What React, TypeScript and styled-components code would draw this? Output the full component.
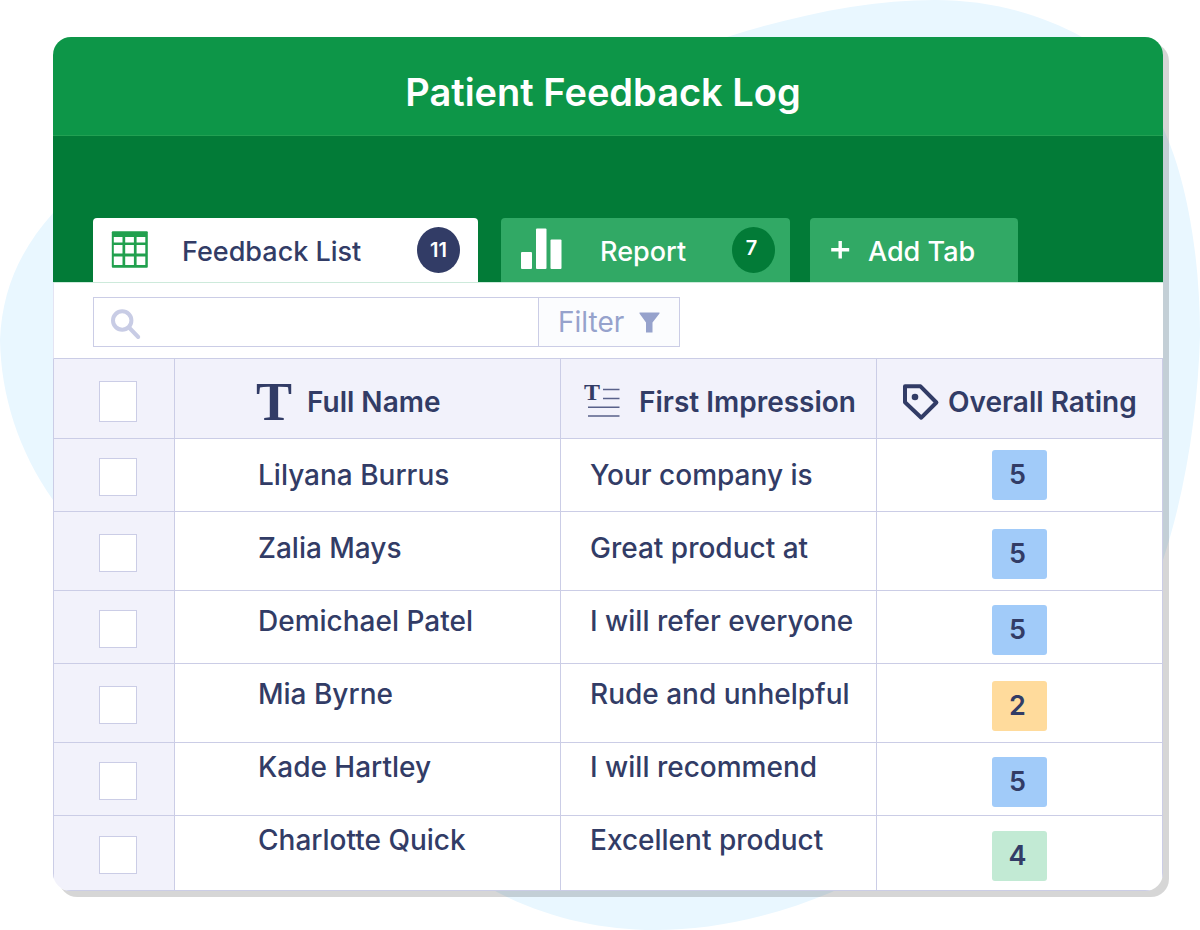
import React from "react";
import styled, { createGlobalStyle } from "styled-components";

const navy = "#323c66";
const line = "#cbcde6";
const lavender = "#f2f2fb";

const GlobalStyle = createGlobalStyle`
  * { box-sizing: border-box; }
  body {
    margin: 0;
    background: #ffffff;
    color: ${navy};
    font-family: Inter, "Liberation Sans", sans-serif;
  }
  button, input { font: inherit; color: inherit; }
`;

const Page = styled.main`
  position: relative;
  padding: 37px 37px 39px 53px;
`;

const Backdrop = styled.svg`
  position: absolute;
  top: 0;
  left: 0;
  width: 100%;
  height: 100%;
`;

const Card = styled.section`
  position: relative;
  overflow: hidden;
  background: #ffffff;
  border-radius: 18px;
  box-shadow: 6px 6px 0 rgba(0, 0, 0, 0.16);
`;

const TitleBar = styled.header`
  display: flex;
  align-items: center;
  justify-content: center;
  height: 99px;
  padding-top: 12px;
  padding-right: 10px;
  background: #0d9648;
  border-bottom: 1px solid #22a052;
`;

const Title = styled.h1`
  margin: 0;
  color: #ffffff;
  font-size: 38px;
  line-height: 48px;
  font-weight: 600;
`;

const TabBar = styled.nav`
  display: flex;
  align-items: flex-end;
  height: 147px;
  padding: 0 40px;
  background: #027b37;
  border-bottom: 1px solid #cdeadb;
`;

const Tab = styled.button<{ $width: number; $gap: number; $active?: boolean }>`
  display: flex;
  align-items: center;
  width: ${(p) => p.$width}px;
  height: 64px;
  margin: 0 ${(p) => p.$gap}px 0 0;
  padding: ${(p) => (p.$active ? "0 18px" : "0 15px 0 20px")};
  border: 0;
  border-radius: 4px 4px 0 0;
  background: ${(p) => (p.$active ? "#ffffff" : "#31a965")};
  color: ${(p) => (p.$active ? navy : "#ffffff")};
  font-size: 27px;
  line-height: 36px;
  font-weight: 500;
  text-align: left;
  cursor: pointer;
`;

const TabLabel = styled.span<{ $indent: number }>`
  flex: 1;
  padding-top: 3px;
  padding-left: ${(p) => p.$indent}px;
  white-space: nowrap;
`;

const Count = styled.span<{ $dark?: boolean }>`
  display: flex;
  align-items: center;
  justify-content: center;
  width: 43px;
  height: 46px;
  padding-right: ${(p) => (p.$dark ? 0 : 4)}px;
  padding-bottom: ${(p) => (p.$dark ? 0 : 4)}px;
  border-radius: 50%;
  background: ${(p) => (p.$dark ? navy : "#027b37")};
  color: #ffffff;
  font-size: 20px;
  line-height: 24px;
  font-weight: 600;
`;

const Toolbar = styled.form`
  display: flex;
  padding: 14px 40px 11px 39px;
  border-left: 1px solid #e4e4f3;
  border-bottom: 1px solid ${line};
`;

const SearchBox = styled.label`
  display: flex;
  align-items: center;
  width: 446px;
  height: 50px;
  padding-top: 2px;
  padding-left: 16px;
  border: 1px solid ${line};
`;

const SearchInput = styled.input`
  flex: 1;
  min-width: 0;
  height: 44px;
  padding: 0 12px;
  border: 0;
  outline: 0;
  background: transparent;
  font-size: 24px;
`;

const FilterButton = styled.button`
  display: flex;
  align-items: center;
  justify-content: space-between;
  width: 141px;
  height: 50px;
  padding: 0 19px;
  border: 1px solid ${line};
  border-left: 0;
  background: #fbfcfe;
  color: #96a2cc;
  font-size: 28px;
  line-height: 36px;
  cursor: pointer;
`;

const Table = styled.table`
  width: 100%;
  table-layout: fixed;
  border-spacing: 0;
  border-left: 1px solid ${line};
`;

const Col = styled.col<{ $width?: number }>`
  width: ${(p) => (p.$width ? p.$width + "px" : "auto")};
`;

const HeadCell = styled.th<{ $indent: number }>`
  height: 80px;
  padding: 6px 0 0 ${(p) => p.$indent}px;
  background: ${lavender};
  border-right: 1px solid ${line};
  border-bottom: 1px solid ${line};
  font-size: 28px;
  line-height: 36px;
  font-weight: 600;
  text-align: left;
`;

const HeadContent = styled.span<{ $gap: number }>`
  display: flex;
  align-items: center;
  gap: ${(p) => p.$gap}px;
  white-space: nowrap;
`;

const Row = styled.tr<{ $height: number }>`
  height: ${(p) => p.$height}px;
`;

const Cell = styled.td`
  padding: 0;
  border-right: 1px solid ${line};
  border-bottom: 1px solid ${line};
`;

const SelectCell = styled(Cell)`
  padding: 4px 0 0 45px;
  background: ${lavender};
`;

const TextCell = styled(Cell)<{ $top: number; $indent: number }>`
  padding: ${(p) => p.$top}px 0 0 ${(p) => p.$indent}px;
  vertical-align: top;
  font-size: 28px;
  line-height: 36px;
  font-weight: 500;
  white-space: nowrap;
`;

const RatingCell = styled(Cell)<{ $top: number }>`
  padding-top: ${(p) => p.$top}px;
`;

const Rating = styled.span<{ $tone: string }>`
  display: flex;
  align-items: center;
  justify-content: center;
  width: 55px;
  height: 50px;
  margin: 0 auto;
  padding-right: 4px;
  border-radius: 3px;
  background: ${(p) => p.$tone};
  font-size: 27px;
  line-height: 36px;
  font-weight: 600;
`;

const Checkbox = styled.input<{ $tall?: boolean }>`
  display: block;
  appearance: none;
  width: 38px;
  height: ${(p) => (p.$tall ? 41 : 38)}px;
  margin: 0;
  border: 1px solid ${line};
  background: #ffffff;
  &:checked { background: #96a2cc; }
`;

const Glyph = styled.svg`
  display: block;
  flex: none;
  overflow: visible;
`;

const GridIcon = () => (
  <Glyph width="37" height="38" viewBox="0 0 37 38" aria-hidden="true">
    <rect x="0.8" y="0.3" width="36" height="36.500" rx="1" fill="#21a04e" />
    <g fill="#ffffff">
      {[2.8, 14.2, 25.6].map((x) => (
        <React.Fragment key={x}>
          <rect x={x} y="6" width="8.700" height="5.500" />
          <rect x={x} y="14" width="8.700" height="8.500" />
          <rect x={x} y="25.500" width="8.700" height="8.500" />
        </React.Fragment>
      ))}
    </g>
  </Glyph>
);

const BarsIcon = () => (
  <Glyph width="41" height="44" viewBox="0 0 41 44" aria-hidden="true" fill="#ffffff">
    <rect x="0" y="24" width="11" height="17" rx="1" />
    <rect x="15" y="0.5" width="10.500" height="40.5" rx="1" />
    <rect x="29.5" y="11.5" width="11" height="29.5" rx="1" />
  </Glyph>
);

const PlusIcon = () => (
  <Glyph width="19" height="20" viewBox="0 0 19 20" aria-hidden="true">
    <path d="M10.200 1v17.500M1.200 9.800h18" stroke="#ffffff" strokeWidth="3.400" />
  </Glyph>
);

const SearchIcon = () => (
  <Glyph width="32" height="32" viewBox="0 0 32 32" aria-hidden="true" fill="none" stroke="#c8cce5">
    <circle cx="12.2" cy="13.500" r="9.2" strokeWidth="4" />
    <path d="M19.5 21l8.700 9" strokeWidth="4" strokeLinecap="round" />
  </Glyph>
);

const FunnelIcon = () => (
  <Glyph width="21" height="21" viewBox="0 0 21 21" aria-hidden="true">
    <path d="M0.5 0.5h20v1L13.5 10.5v10h-6.500v-10L0.500 1.500z" fill="#96a2cc" />
  </Glyph>
);

const ShortTextIcon = () => (
  <Glyph width="33" height="38" viewBox="0 0 33 38" aria-hidden="true">
    <text x="-2" y="37" fontFamily="Liberation Serif, serif" fontWeight="700" fontSize="54" fill={navy}>
      T
    </text>
  </Glyph>
);

const LongTextIcon = () => (
  <Glyph width="36" height="36" viewBox="0 0 36 36" aria-hidden="true">
    <text x="-1" y="16" fontFamily="Liberation Serif, serif" fontWeight="700" fontSize="24" fill={navy}>
      T
    </text>
    <path d="M18 5.500h16.500M18 14.500h16.500M3 23.300h31.500M3 32h31.500" stroke="#59618a" strokeWidth="1.500" />
  </Glyph>
);

const TagIcon = () => (
  <Glyph width="36" height="36" viewBox="0 0 36 36" aria-hidden="true">
    <path d="M2 2.300H17.500L33.400 18.500L18.300 33.700L2 18.300Z" fill="none" stroke={navy} strokeWidth="4" strokeLinejoin="round" />
    <circle cx="12" cy="13" r="3.300" fill={navy} />
  </Glyph>
);

const tones: Record<number, string> = { 5: "#a1cbf9", 2: "#ffdb9c", 4: "#c2ead4" };

const entries = [
  { name: "Lilyana Burrus", note: "Your company is", rating: 5, height: 73, textTop: 18, ratingTop: 0 },
  { name: "Zalia Mays", note: "Great product at", rating: 5, height: 79, textTop: 18, ratingTop: 6 },
  { name: "Demichael Patel", note: "I will refer everyone", rating: 5, height: 73, textTop: 12, ratingTop: 6 },
  { name: "Mia Byrne", note: "Rude and unhelpful", rating: 2, height: 79, textTop: 12, ratingTop: 6 },
  { name: "Kade Hartley", note: "I will recommend", rating: 5, height: 73, textTop: 6, ratingTop: 6 },
  { name: "Charlotte Quick", note: "Excellent product", rating: 4, height: 75, textTop: 6, ratingTop: 6 },
];

export default function App() {
  return (
    <>
      <GlobalStyle />
      <Page>
        <Backdrop viewBox="0 0 1200 930" preserveAspectRatio="none" aria-hidden="true">
          <path
            d="M0 340C2 290 20 250 53 213C200 60 500 110 727 37C800 14 870 0 935 0C990 0 1040 14 1082 37C1120 60 1145 90 1163 128C1188 182 1200 260 1200 335C1198 410 1186 490 1163 560C1100 720 960 830 832 892C770 918 710 930 655 930C600 930 545 917 497 892C330 800 150 660 53 500C18 450 1 395 0 340Z"
            fill="#e9f7ff"
          />
        </Backdrop>
        <Card>
          <TitleBar>
            <Title>Patient Feedback Log</Title>
          </TitleBar>
          <TabBar>
            <Tab type="button" $width={385} $gap={23} $active>
              <GridIcon />
              <TabLabel $indent={34}>Feedback List</TabLabel>
              <Count $dark>11</Count>
            </Tab>
            <Tab type="button" $width={289} $gap={20}>
              <BarsIcon />
              <TabLabel $indent={38}>Report</TabLabel>
              <Count>7</Count>
            </Tab>
            <Tab type="button" $width={208} $gap={0}>
              <PlusIcon />
              <TabLabel $indent={19}>Add Tab</TabLabel>
            </Tab>
          </TabBar>
          <Toolbar>
            <SearchBox>
              <SearchIcon />
              <SearchInput type="search" aria-label="Search" />
            </SearchBox>
            <FilterButton type="button">
              Filter
              <FunnelIcon />
            </FilterButton>
          </Toolbar>
          <Table>
            <colgroup>
              <Col $width={121} />
              <Col $width={386} />
              <Col $width={316} />
              <Col />
            </colgroup>
            <thead>
              <tr>
                <HeadCell $indent={45}>
                  <Checkbox type="checkbox" aria-label="Select all" $tall />
                </HeadCell>
                <HeadCell $indent={83}>
                  <HeadContent $gap={16}>
                    <ShortTextIcon />
                    Full Name
                  </HeadContent>
                </HeadCell>
                <HeadCell $indent={24}>
                  <HeadContent $gap={18}>
                    <LongTextIcon />
                    First Impression
                  </HeadContent>
                </HeadCell>
                <HeadCell $indent={26}>
                  <HeadContent $gap={9}>
                    <TagIcon />
                    Overall Rating
                  </HeadContent>
                </HeadCell>
              </tr>
            </thead>
            <tbody>
              {entries.map((e) => (
                <Row key={e.name} $height={e.height}>
                  <SelectCell>
                    <Checkbox type="checkbox" aria-label={"Select " + e.name} />
                  </SelectCell>
                  <TextCell $top={e.textTop} $indent={83}>
                    {e.name}
                  </TextCell>
                  <TextCell $top={e.textTop} $indent={29}>
                    {e.note}
                  </TextCell>
                  <RatingCell $top={e.ratingTop}>
                    <Rating $tone={tones[e.rating]}>{e.rating}</Rating>
                  </RatingCell>
                </Row>
              ))}
            </tbody>
          </Table>
        </Card>
      </Page>
    </>
  );
}
